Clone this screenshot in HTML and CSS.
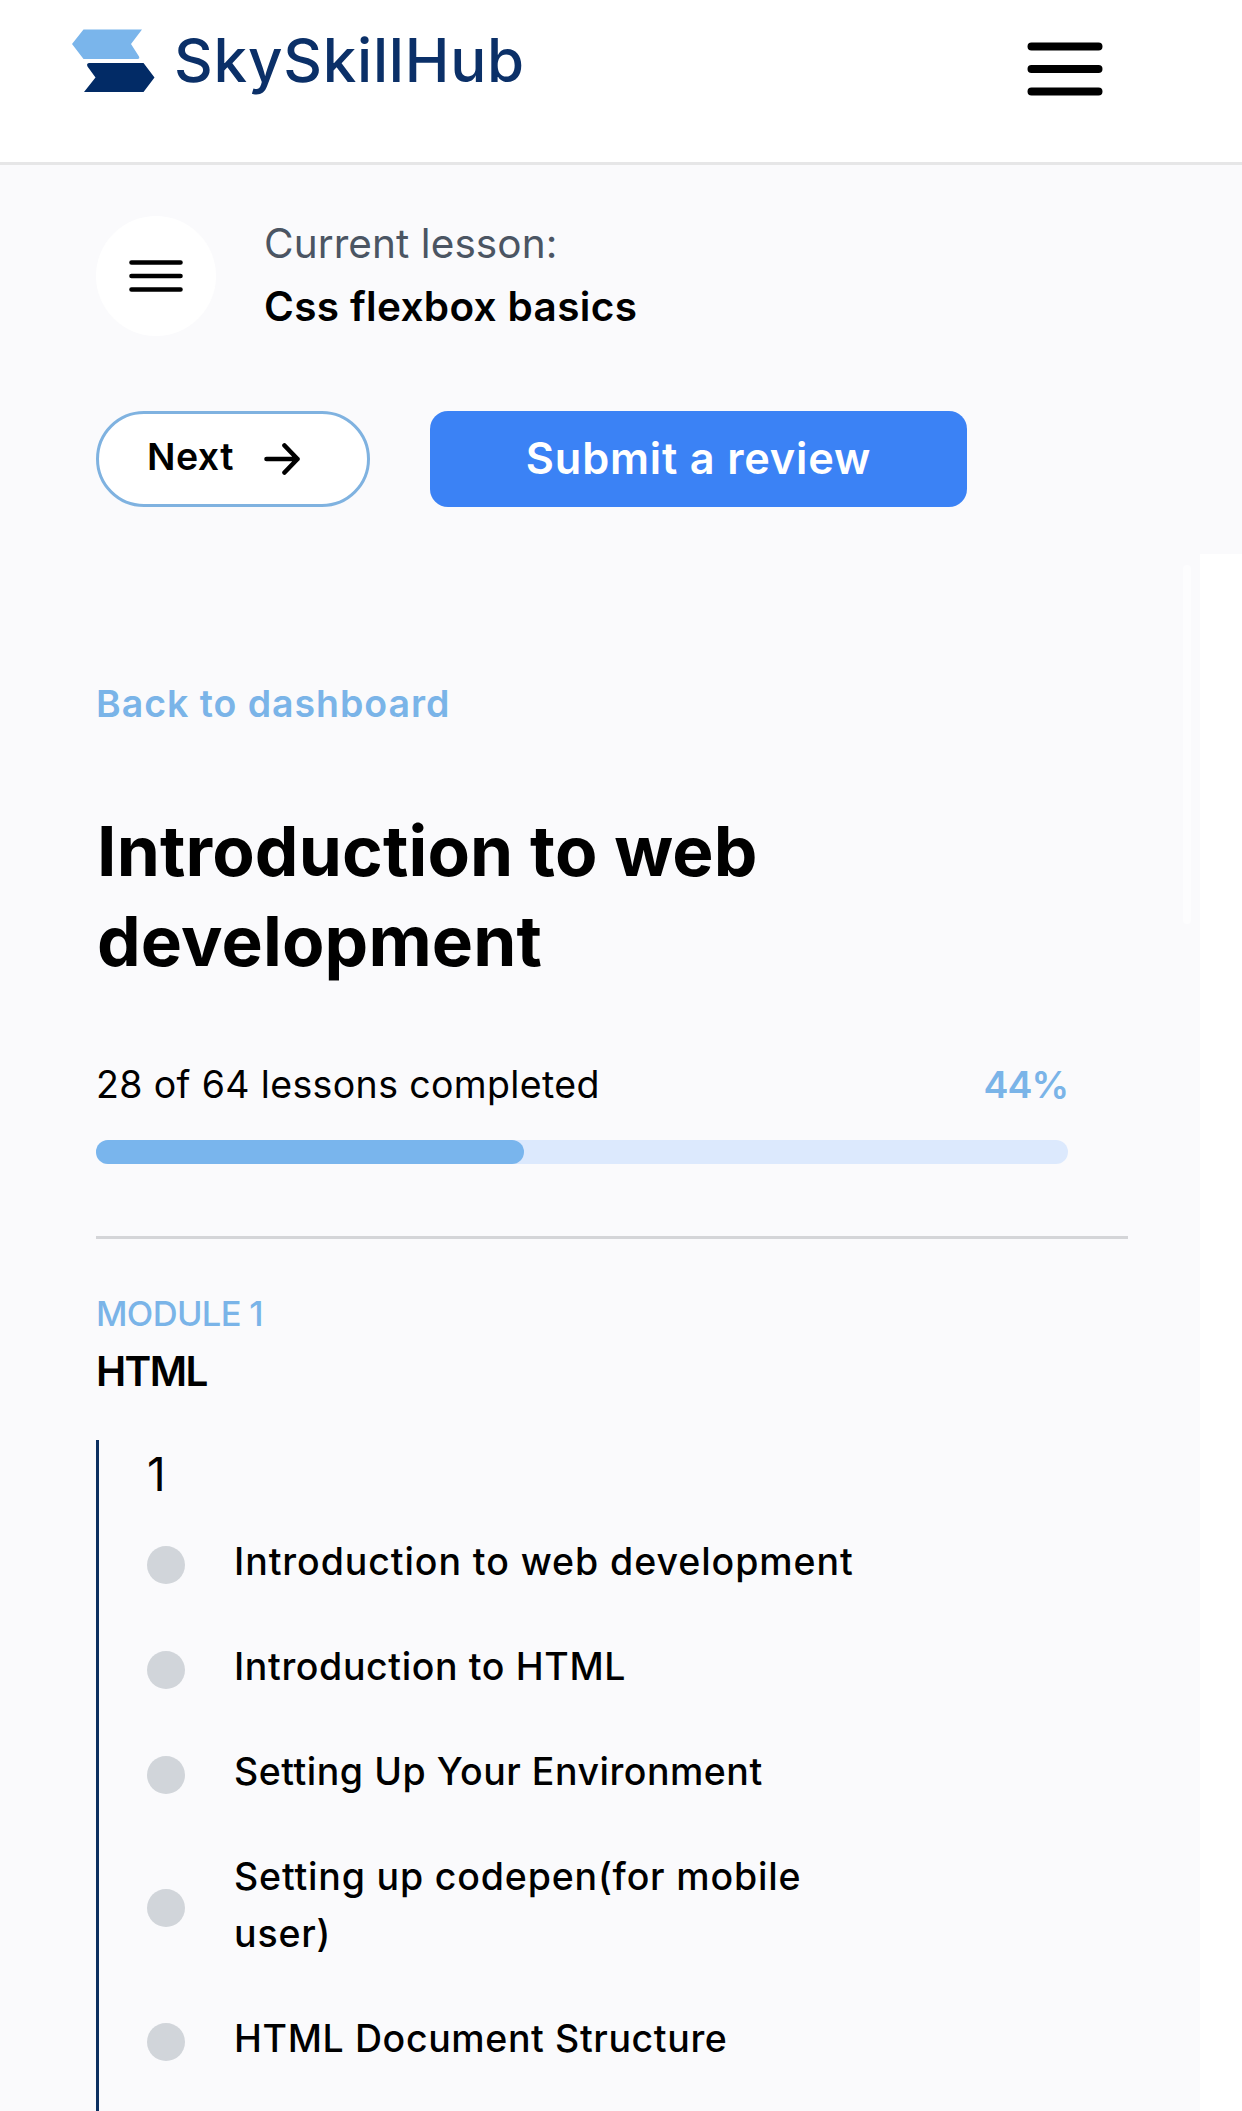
FILE: index.html
```
<!DOCTYPE html>
<html lang="en">
<head>
<meta charset="utf-8">
<title>SkySkillHub</title>
<link rel="stylesheet" href="styles.css">
</head>
<body>
<header class="site-header">
  <a class="logo">
    <svg class="logo-mark" viewBox="0 0 84 64" width="84" height="64" aria-hidden="true">
      <path fill="#7ab5eb" d="M11.500 1.500H70L59 16l8 12.500q1 2.500-1.500 2.500H11.500L0 16z"/>
      <path fill="#022b66" d="M17.500 35H71.500L82.500 49.500 71.500 64H12L23.500 49.500 15.500 38.500q-1.500-3.500 2-3.500z"/>
    </svg>
    <span class="logo-text">SkySkillHub</span>
  </a>
  <svg class="site-menu" viewBox="0 0 76 54" width="76" height="54" aria-label="Menu">
    <path d="M4.500 4.500H71.500M4.500 27H71.500M4.500 49.500H71.500"/>
  </svg>
</header>
<section class="lesson-bar">
  <div class="current">
    <button class="lesson-toggle" aria-label="Lessons">
      <svg viewBox="0 0 54 34" width="54" height="34"><path d="M2.500 3.500H51.500M2.500 17H51.500M2.500 30.500H51.500"/></svg>
    </button>
    <div>
      <p class="current-label">Current lesson:</p>
      <p class="current-name">Css flexbox basics</p>
    </div>
  </div>
  <div class="actions">
    <button class="next"><span>Next</span>
      <svg viewBox="0 0 36 32" width="36" height="32"><path d="M2.500 16H33.500M20.500 2.500L33.500 16L20.500 29.500"/></svg>
    </button>
    <button class="review">Submit a review</button>
  </div>
</section>
<main class="sidebar">
  <a class="back">Back to dashboard</a>
  <h1 class="title">Introduction to web development</h1>
  <div class="progress-label"><span class="done">28 of 64 lessons completed</span><span class="percent">44%</span></div>
  <div class="progress"><div class="progress-fill" style="width:44%"></div></div>
  <hr class="divider">
  <p class="module">MODULE 1</p>
  <h2 class="module-name">HTML</h2>
  <div class="lessons">
    <p class="section-number">1</p>
    <ul class="lesson-list">
      <li><i class="dot"></i><span>Introduction to web development</span></li>
      <li class="mixed"><i class="dot"></i><span>Introduction to HTML</span></li>
      <li class="tight"><i class="dot"></i><span>Setting Up Your Environment</span></li>
      <li class="wide"><i class="dot"></i><span>Setting up codepen(for mobile user)</span></li>
      <li class="mixed"><i class="dot"></i><span>HTML Document Structure</span></li>
    </ul>
  </div>
  <div class="scroll-thumb"></div>
</main>
</body>
</html>
```
FILE: styles.css
```
* { box-sizing: border-box; margin: 0; padding: 0; }

body {
  height: 2111px;
  overflow: hidden;
  background: #fff;
  color: #000;
  font-family: Inter, "Liberation Sans", sans-serif;
}

button { font: inherit; color: inherit; border: 0; }
svg { display: block; flex: none; }

.site-header {
  height: 165px;
  border-bottom: 3px solid #e6e6e7;
  padding: 24px 139px 0 72px;
  display: flex;
  justify-content: space-between;
  align-items: flex-start;
}
.logo { display: flex; gap: 18px; }
.logo-mark { margin-top: 4px; }
.logo-text { font-size: 60px; line-height: 72px; font-weight: 500; letter-spacing: 0.76px; color: #0b3068; }
.site-menu { margin-top: 18px; fill: none; stroke: #000; stroke-width: 8; stroke-linecap: round; }

.lesson-bar { height: 389px; padding: 46.5px 96px 0; background: #fafafc; }
.current { display: flex; align-items: center; gap: 48px; height: 126px; }
.lesson-toggle {
  width: 120px;
  height: 120px;
  margin-top: 3px;
  border-radius: 50%;
  background: #fff;
  display: flex;
  align-items: center;
  justify-content: center;
}
.lesson-toggle svg { fill: none; stroke: #000; stroke-width: 4.6; stroke-linecap: round; }
.current-label { font-size: 40.5px; line-height: 63px; letter-spacing: 0.08px; color: #4b5563; }
.current-name { font-size: 40.5px; line-height: 63px; letter-spacing: 0.35px; font-weight: 600; }

.actions { display: flex; gap: 60px; margin-top: 73.5px; }
.next {
  width: 274px;
  height: 96px;
  padding: 0 67px 0 48px;
  border: 3px solid #7fb2e0;
  border-radius: 48px;
  background: #fff;
  font-size: 37.5px;
  font-weight: 600;
  letter-spacing: 0.5px;
  display: flex;
  align-items: center;
  justify-content: space-between;
}
.next span { padding-bottom: 5px; }
.next svg { fill: none; stroke: #000; stroke-width: 4.6; stroke-linecap: round; stroke-linejoin: round; }
.review {
  width: 537px;
  height: 96px;
  padding-bottom: 2px;
  border-radius: 18px;
  background: #3b82f5;
  color: #fff;
  font-size: 43.3px;
  font-weight: 600;
  letter-spacing: 0.82px;
}

.sidebar { position: relative; width: 1200px; height: 1557px; padding: 121px 72px 0 96px; background: #fafafc; }
.back { display: block; font-size: 37.5px; line-height: 57px; font-weight: 600; letter-spacing: 0.95px; color: #7ab4e8; }
.title { width: 800px; margin-top: 74px; padding-left: 1px; font-size: 69.3px; line-height: 90px; font-weight: 700; letter-spacing: 0.17px; }
.progress-label { display: flex; justify-content: space-between; width: 972px; margin-top: 70px; font-size: 37.5px; line-height: 57px; }
.done { letter-spacing: 0.36px; }
.percent { font-weight: 600; letter-spacing: -1.08px; color: #7ab4e8; }
.progress { width: 972px; height: 24px; margin-top: 27px; border-radius: 12px; background: #dce9fd; }
.progress-fill { height: 24px; border-radius: 12px; background: #79b5ed; }
.divider { height: 3px; margin-top: 72px; border: 0; background: #d4d5d8; }
.module { margin-top: 48px; font-size: 34.5px; line-height: 54px; font-weight: 550; letter-spacing: -0.65px; color: #7ab4e8; }
.module-name { margin-top: 1px; font-size: 40.5px; line-height: 60px; font-weight: 600; letter-spacing: -1.6px; }

.lessons { height: 671px; margin-top: 38px; padding-left: 48px; border-left: 3px solid #0b3060; }
.section-number { font-size: 46px; line-height: 68px; }
.lesson-list {
  display: flex;
  flex-direction: column;
  gap: 48px;
  margin-top: 25px;
  list-style: none;
  font-size: 37.5px;
  line-height: 57px;
  font-weight: 480;
  letter-spacing: 0.93px;
}
.lesson-list li { display: flex; align-items: center; gap: 49px; }
.lesson-list span { max-width: 640px; }
.lesson-list .mixed { letter-spacing: 0.62px; }
.lesson-list .tight { letter-spacing: 0.52px; }
.lesson-list .wide { letter-spacing: 0.83px; }
.dot { flex: none; width: 38px; height: 38px; margin-top: 6px; border-radius: 50%; background: #d1d5da; }

.scroll-thumb { position: absolute; top: 11px; right: 9px; width: 8px; height: 359px; border-radius: 4px; background: #fdfdfe; }
```
